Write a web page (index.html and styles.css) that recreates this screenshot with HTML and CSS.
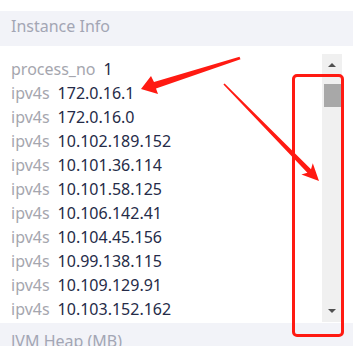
FILE: index.html
```html
<!DOCTYPE html>
<html lang="en">
  <head>
    <meta charset="UTF-8" />
    <title>Instance Info</title>
    <link rel="stylesheet" href="styles.css">
  </head>
  <body>
    <div class="panel">
      <div class="panel-title">Instance Info</div>

      <div class="panel-body">
        <div class="list">
          <div class="rows">
            <div class="row"><span class="key">host_name</span><span class="val">localhost</span></div>
            <div class="row"><span class="key">process_no</span><span class="val">1</span></div>
            <div class="row"><span class="key">ipv4s</span><span class="val">172.0.16.1</span></div>
            <div class="row"><span class="key">ipv4s</span><span class="val">172.0.16.0</span></div>
            <div class="row"><span class="key">ipv4s</span><span class="val">10.102.189.152</span></div>
            <div class="row"><span class="key">ipv4s</span><span class="val">10.101.36.114</span></div>
            <div class="row"><span class="key">ipv4s</span><span class="val">10.101.58.125</span></div>
            <div class="row"><span class="key">ipv4s</span><span class="val">10.106.142.41</span></div>
            <div class="row"><span class="key">ipv4s</span><span class="val">10.104.45.156</span></div>
            <div class="row"><span class="key">ipv4s</span><span class="val">10.99.138.115</span></div>
            <div class="row"><span class="key">ipv4s</span><span class="val">10.109.129.91</span></div>
            <div class="row"><span class="key">ipv4s</span><span class="val">10.103.152.162</span></div>
            <div class="row"><span class="key">ipv4s</span><span class="val">10.100.12.7</span></div>
          </div>
        </div>

        <div class="scrollbar">
          <div class="sb-btn"><span class="tri-up"></span></div>
          <div class="sb-track"><div class="sb-thumb"></div></div>
          <div class="sb-btn"><span class="tri-down"></span></div>
        </div>
      </div>

      <div class="panel-title next">JVM Heap (MB)</div>
    </div>

    <!-- red annotation drawn over the screenshot -->
    <div class="mark-box"></div>
    <svg class="marks" width="353" height="346" viewBox="0 0 353 346">
      <polygon fill="#ff1a12" points="141,89 158,94 156,88.5 240.5,59.2 239.5,56.8 154,82 151,76" />
      <polygon fill="#ff1a12" points="319,181 301.4,174.5 307.4,172.8 223.4,84.6 224.6,83.4 311,169.3 312.8,163.3" />
    </svg>
  </body>
</html>
```

FILE: styles.css
```css
body {
  margin: 0;
  padding-top: 11px;
  background: #ffffff;
  font-family: "Noto Sans", "Open Sans", sans-serif;
  overflow: hidden;
}

.panel {
  width: 353px;
}

.panel-title {
  height: 35px;
  line-height: 31px;
  padding: 0 0 4px 11px;
  box-sizing: border-box;
  background: #f2f3f8;
  color: #a3a6b4;
  font-size: 16px;
}

.panel-title.next {
  padding-top: 3px;
}

.panel-body {
  display: flex;
  height: 269px;
  padding: 8px 11px 0 0;
}

.list {
  flex: 1;
  height: 268px;
  overflow: hidden;
}

/* list is scrolled a little, first row is cut */
.rows {
  margin-top: -21px;
}

.row {
  height: 24px;
  line-height: 24px;
  padding-left: 11px;
  font-size: 16px;
  white-space: nowrap;
}

.key {
  color: #a5a6ae;
  margin-right: 8px;
}

.val {
  color: #252b48;
}

.scrollbar {
  width: 20px;
  height: 268px;
  background: #f0f0f0;
  display: flex;
  flex-direction: column;
}

.sb-btn {
  height: 22px;
  display: flex;
  align-items: center;
  justify-content: center;
}

.tri-up,
.tri-down {
  width: 0;
  height: 0;
  border-left: 4px solid transparent;
  border-right: 4px solid transparent;
}

.tri-up {
  border-bottom: 4px solid #505050;
}

.tri-down {
  border-top: 4px solid #505050;
}

.sb-track {
  flex: 1;
  padding-top: 8px;
}

.sb-thumb {
  width: 17px;
  height: 23px;
  margin-left: 2px;
  background: #a8a8a8;
}

.mark-box {
  position: absolute;
  left: 292px;
  top: 74px;
  width: 46px;
  height: 257px;
  border: 3px solid #ff1a12;
  border-radius: 5px;
}

.marks {
  position: absolute;
  left: 0;
  top: 0;
}
```
